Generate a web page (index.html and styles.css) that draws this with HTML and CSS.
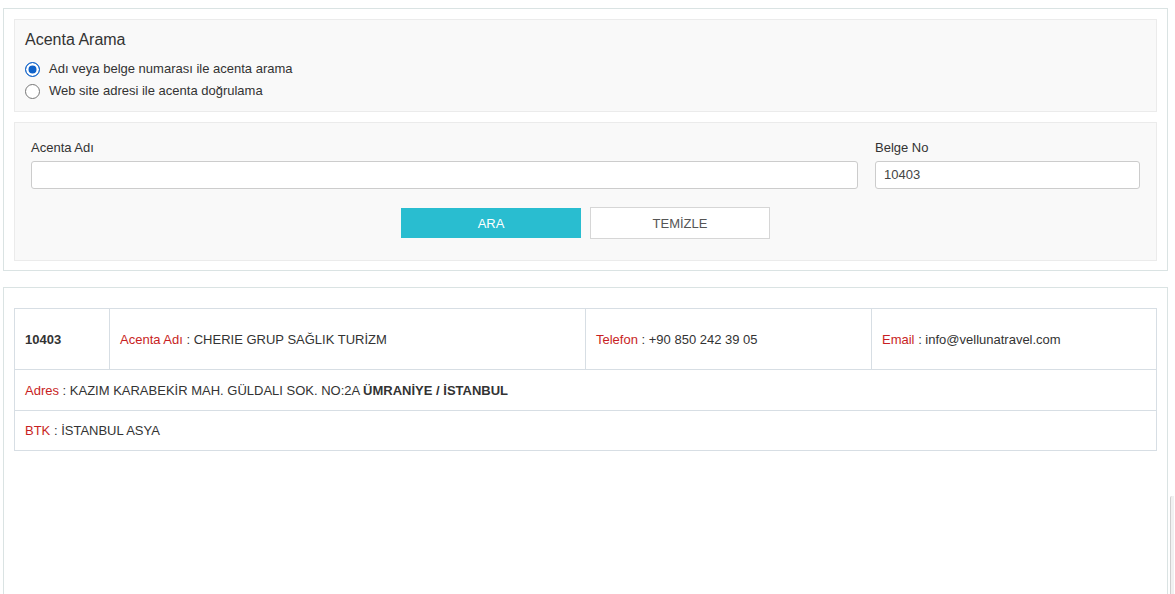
FILE: index.html
```html
<!DOCTYPE html>
<html lang="tr">
<head>
<meta charset="utf-8">
<title>Acenta Arama</title>
<link rel="stylesheet" href="styles.css">
</head>
<body>
<div class="page">
  <section class="panel search-panel">
    <div class="box options">
      <h2 class="title">Acenta Arama</h2>
      <label class="radio"><span class="dot checked"></span>Adı veya belge numarası ile acenta arama</label>
      <label class="radio"><span class="dot"></span>Web site adresi ile acenta doğrulama</label>
    </div>
    <div class="box form">
      <div class="fields">
        <div class="field">
          <div class="lbl">Acenta Adı</div>
          <div class="input"></div>
        </div>
        <div class="field">
          <div class="lbl">Belge No</div>
          <div class="input">10403</div>
        </div>
      </div>
      <div class="buttons">
        <button class="btn primary">ARA</button>
        <button class="btn ghost">TEMİZLE</button>
      </div>
    </div>
  </section>
  <section class="panel result-panel">
    <table class="result">
      <tr class="r1">
        <td class="no">10403</td>
        <td class="c-name"><span class="k">Acenta Adı</span> : CHERIE GRUP SAĞLIK TURİZM</td>
        <td class="c-tel"><span class="k">Telefon</span> : +90 850 242 39 05</td>
        <td class="c-mail"><span class="k">Email</span> : info@vellunatravel.com</td>
      </tr>
      <tr class="r2">
        <td colspan="4"><span class="k">Adres</span> : KAZIM KARABEKİR MAH. GÜLDALI SOK. NO:2A <b>ÜMRANİYE / İSTANBUL</b></td>
      </tr>
      <tr class="r3">
        <td colspan="4"><span class="k">BTK</span> : İSTANBUL ASYA</td>
      </tr>
    </table>
  </section>
  <div class="scrollbar"></div>
</div>
</body>
</html>
```

FILE: styles.css
```css
html, body {
  margin: 0;
  padding: 0;
  background: #fff;
  font-family: "Liberation Sans", Arial, sans-serif;
  color: #333;
  overflow: hidden;
}
.page {
  width: 1175px;
  height: 594px;
  box-sizing: border-box;
  padding: 8px 7px 0 3px;
  position: relative;
}
.panel {
  border: 1px solid #dae3e3;
  background: #fff;
  box-sizing: border-box;
}
.search-panel {
  padding: 10px 10px 9px 10px;
}
.box {
  border: 1px solid #ebebeb;
  background: #f9f9f9;
}
.options {
  padding: 10px 0 0 10px;
  box-sizing: content-box;
  height: 81px;
}
.title {
  margin: 0 0 8px 0;
  font-size: 16px;
  font-weight: normal;
  color: #333;
  line-height: 20px;
}
.radio {
  display: flex;
  align-items: center;
  font-size: 13px;
  line-height: 22px;
  color: #333;
}
.dot {
  width: 15px;
  height: 15px;
  border: 1px solid #767676;
  border-radius: 50%;
  box-sizing: border-box;
  margin-right: 9px;
  background: #fff;
  flex: none;
}
.dot.checked {
  border: 1px solid #0f62c9;
  box-shadow: inset 0 0 0 2.5px #fff;
  background: #0f62c9;
}
.form {
  margin-top: 10px;
  padding: 16px 16px 21px 16px;
  height: 100px;
  box-sizing: content-box;
}
.fields {
  display: grid;
  grid-template-columns: 1fr 265px;
  column-gap: 17px;
}
.lbl {
  font-size: 13px;
  line-height: 18px;
  margin-bottom: 4px;
  color: #333;
}
.input {
  height: 28px;
  box-sizing: border-box;
  border: 1px solid #ccc;
  border-radius: 3px;
  background: #fff;
  font-size: 13px;
  line-height: 26px;
  padding: 0 8px;
  color: #444;
}
.buttons {
  display: flex;
  justify-content: center;
  gap: 9px;
  margin-top: 18px;
}
.btn {
  width: 180px;
  height: 32px;
  font-family: "Liberation Sans", Arial, sans-serif;
  font-size: 13px;
  border-radius: 0;
  cursor: pointer;
}
.btn.primary {
  background: #29bdd0;
  color: #fff;
  border: 1px solid #29bdd0;
  height: 30px;
  margin-top: 1px;
}
.btn.ghost {
  background: #fff;
  color: #555;
  border: 1px solid #d6d6d6;
}
.result-panel {
  margin-top: 16px;
  height: 320px;
  padding: 20px 10px 0 10px;
}
.result {
  width: 100%;
  border-collapse: collapse;
  font-size: 13px;
  color: #333;
}
.result td {
  border: 1px solid #d7dee4;
  padding: 0 10px;
  vertical-align: middle;
}
.r1 td { height: 60px; }
.r2 td { height: 40px; }
.r3 td { height: 39px; }
.no { width: 74px; font-weight: bold; }
.c-name { width: 455px; }
.c-tel { width: 265px; }
.k { color: #c81e23; }
.result b { font-weight: bold; }
.scrollbar {
  position: absolute;
  right: 1px;
  top: 496px;
  width: 3px;
  height: 98px;
  border-left: 1px solid #cfcfcf;
  background: #f1f1f1;
  border-radius: 2px 0 0 0;
}
```
